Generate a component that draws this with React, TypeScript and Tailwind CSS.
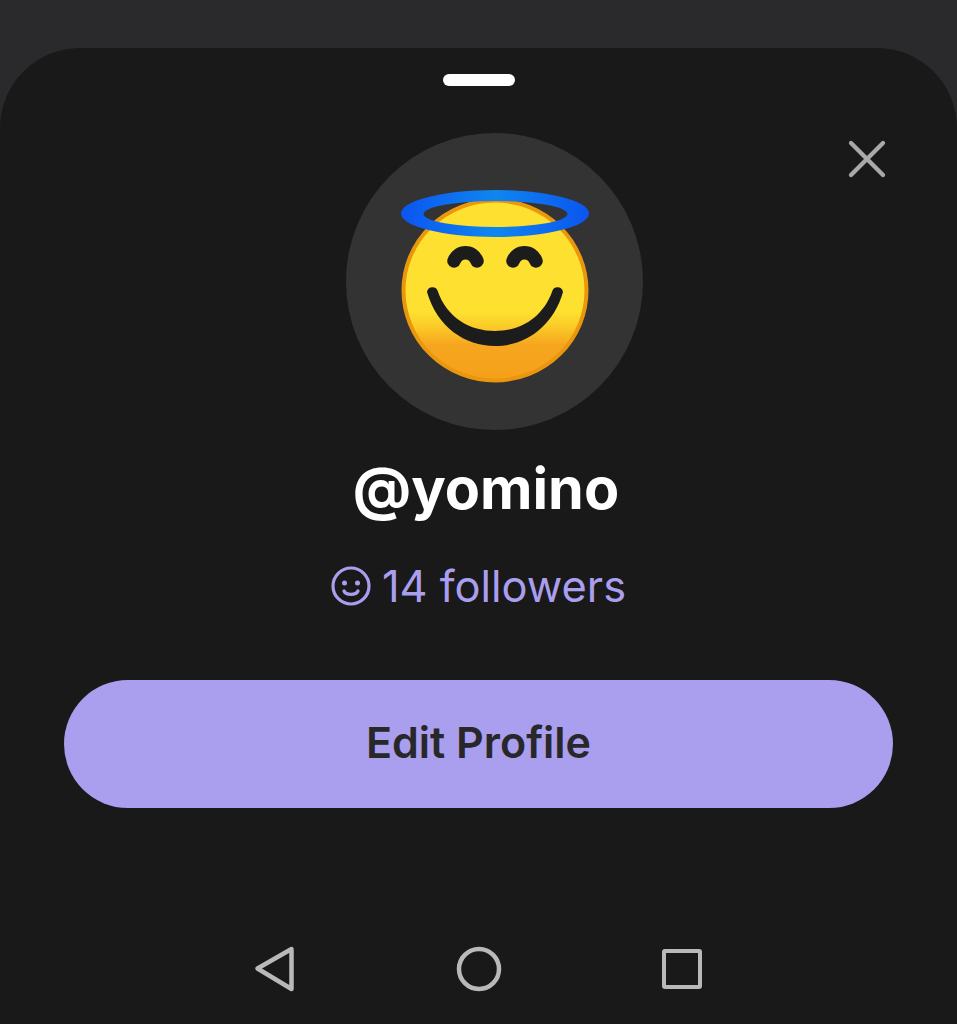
import { X } from 'lucide-react';

function HaloFace() {
  return (
    <svg viewBox="346 133 297 297" className="h-full w-full">
      <defs>
        <linearGradient id="face" x1="0" y1="0" x2="0" y2="1">
          <stop offset="0.62" stopColor="#fde030" />
          <stop offset="0.7" stopColor="#fbcb28" />
          <stop offset="0.8" stopColor="#f6a61e" />
          <stop offset="1" stopColor="#f5a01b" />
        </linearGradient>
        <linearGradient id="halo" x1="0" y1="0" x2="1" y2="0">
          <stop offset="0" stopColor="#0b55f0" />
          <stop offset="0.5" stopColor="#0f86ef" />
          <stop offset="1" stopColor="#0b55f0" />
        </linearGradient>
      </defs>
      <ellipse cx="495" cy="290.5" rx="91.5" ry="90" fill="url(#face)" stroke="#ea970d" strokeWidth="4" />
      <path d="M454 261 C458 250 473 250 477 261" fill="none" stroke="#1c1c1c" strokeWidth="13.5" strokeLinecap="round" />
      <path d="M513 261 C517 250 532 250 536 261" fill="none" stroke="#1c1c1c" strokeWidth="13.5" strokeLinecap="round" />
      <path
        fill="#1c1c1c"
        d="M427 292a5.5 5.5 0 0 1 10.5-1.5C447 318 470 331 495 331C520 331 543 318 552.5 290.5a5.5 5.5 0 0 1 10.5 1.5C553 327 525 346 495 346C465 346 437 327 427 292Z"
      />
      <path
        fillRule="evenodd"
        fill="url(#halo)"
        d="M401 213.5a94 23.5 0 1 0 188 0a94 23.5 0 1 0 -188 0ZM423.5 214a72 13 0 1 1 144 0a72 13 0 1 1 -144 0Z"
      />
    </svg>
  );
}

function SmileIcon() {
  return (
    <svg width="40" height="40" viewBox="0 0 40 40" fill="none" className="shrink-0 text-[#aa9eee]">
      <circle cx="20" cy="20" r="18" stroke="currentColor" strokeWidth="3.2" />
      <circle cx="13.5" cy="17" r="2.5" fill="currentColor" />
      <circle cx="26.5" cy="17" r="2.5" fill="currentColor" />
      <path d="M13 25c2 4.5 12 4.5 14 0" stroke="currentColor" strokeWidth="3.2" strokeLinecap="round" />
    </svg>
  );
}

export default function App() {
  return (
    <div className="flex h-[1024px] flex-col overflow-hidden bg-[#2a2a2c] pt-12 font-['Inter',sans-serif]">
      <div className="relative flex flex-1 flex-col items-center rounded-t-[80px] bg-[#191919]">
        <div className="mt-[26px] h-3 w-[72px] rounded-full bg-white" />

        <button className="absolute right-[58px] top-[79px] text-[#a9a9a9]">
          <X size={64} strokeWidth={1.6} className="block" />
        </button>

        {/* avatar sits a bit right of centre in the source */}
        <div className="ml-8 mt-[47px] h-[297px] w-[297px] overflow-hidden rounded-full bg-[#333333]">
          <HaloFace />
        </div>

        <div className="ml-[15px] mt-[26px] text-[57.5px] font-bold leading-[64px] text-white">@yomino</div>

        <div className="mt-[38px] flex items-center gap-[11px] text-[43.4px] leading-[56px] text-[#aa9eee]">
          <SmileIcon />
          <span>14 followers</span>
        </div>

        <button className="mt-[66px] flex h-[128px] w-[829px] items-center justify-center rounded-full bg-[#aa9eee] pb-1 text-[43px] font-semibold text-[#28282a]">
          Edit Profile
        </button>

        <div className="mt-[138px] flex items-center text-[#b9b9b9]">
          <svg width="44" height="46" viewBox="0 0 44 46" fill="none" stroke="currentColor" strokeWidth="4.5" strokeLinejoin="round" className="overflow-visible">
            <path d="M1.5 22.5 L35.5 3 V43 Z" />
          </svg>
          <svg width="46" height="46" viewBox="0 0 46 46" fill="none" stroke="currentColor" strokeWidth="4.5" className="ml-[156px]">
            <circle cx="23" cy="23" r="20" />
          </svg>
          <div className="ml-[160px] h-10 w-10 rounded-[3px] border-[4.5px] border-current" />
        </div>
      </div>
    </div>
  );
}
